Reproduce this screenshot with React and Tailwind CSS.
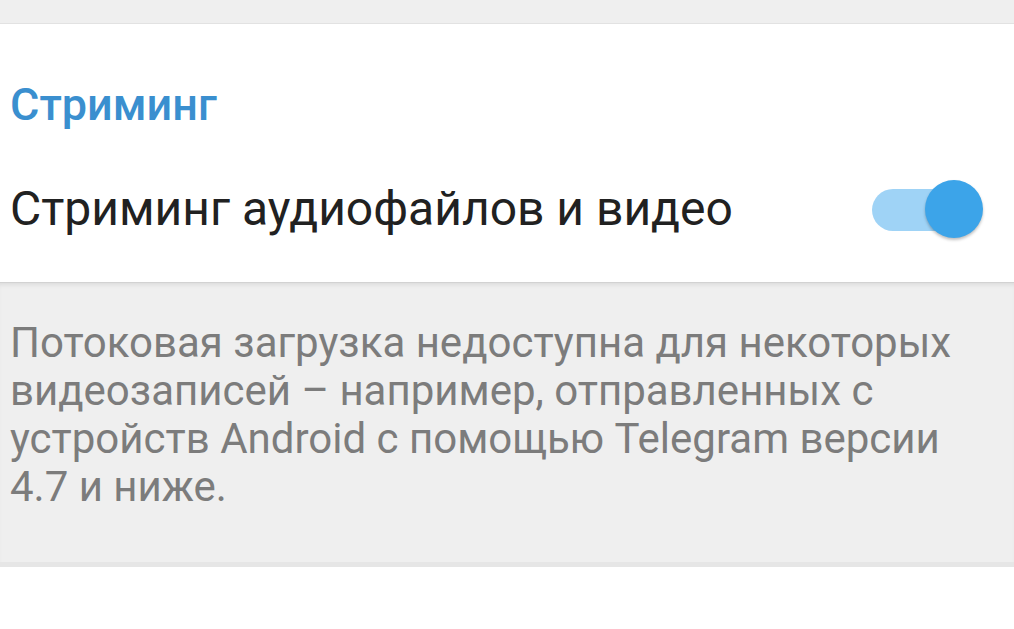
import React, { useState } from 'react';

export default function App() {
  const [on, setOn] = useState(true);

  return (
    <div className="w-[1014px] h-[629px] overflow-hidden bg-white font-['Roboto',sans-serif]">
      <div className="h-[24px] bg-[#efefef] border-b border-[#e2e2e2]" />

      <div className="h-[258px] bg-white pt-[53px]">
        <div className="pl-[10px] text-[45px] leading-[56px] font-medium text-[#3a8fcf]">
          Стриминг
        </div>
        <div className="mt-[47px] h-[58px] flex items-center justify-between pl-[10px] pr-[31px]">
          <span className="text-[48px] leading-[56px] text-[#212121]">Стриминг аудиофайлов и видео</span>
          <button onClick={() => setOn(!on)} className="relative w-[111px] h-[58px]">
            <span className={`absolute left-0 top-[9px] w-[96px] h-[42px] rounded-full ${on ? 'bg-[#9fd3f6]' : 'bg-[#bdbdbd]'}`} />
            <span
              className={`absolute top-0 w-[58px] h-[58px] rounded-full shadow-[0_2px_3px_rgba(0,0,0,0.25)] ${on ? 'left-[53px] bg-[#3ca4e9]' : 'left-0 bg-[#f1f1f1]'}`}
            />
          </button>
        </div>
      </div>

      <div className="h-[285px] bg-[#efefef] border-t border-[#d2d2d2] shadow-[inset_0_4px_4px_-2px_rgba(0,0,0,0.08)] border-b-[5px] border-b-[#e6e6e6]">
        <p className="pl-[10px] pr-[50px] pt-[36px] text-[42px] leading-[48px] text-[#7c7c7c]">
          Потоковая загрузка недоступна для некоторых видеозаписей – например, отправленных с устройств Android с помощью Telegram версии 4.7 и ниже.
        </p>
      </div>

      <div className="bg-white h-[62px]" />
    </div>
  );
}
